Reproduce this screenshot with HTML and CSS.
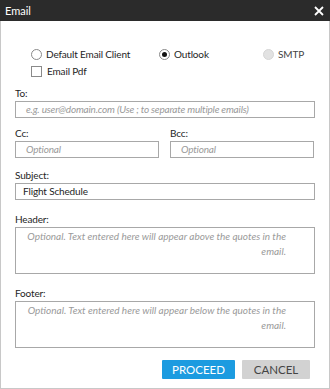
FILE: index.html
```html
<!DOCTYPE html>
<html lang="en">
<head>
    <meta charset="UTF-8">
    <title>Email</title>
    <link rel="stylesheet" href="styles.css">
</head>
<body>
    <div class="window">
        <div class="title-bar">
            <span class="title">Email</span>
            <svg class="close" width="10" height="10" viewBox="0 0 10 10">
                <path d="M1 1 L9 9 M9 1 L1 9" stroke="#fff" stroke-width="1.8" fill="none"/>
            </svg>
        </div>
        <div class="content">
            <div class="options">
                <div class="radio-row">
                    <label class="opt opt-default"><span class="radio"></span>Default Email Client</label>
                    <label class="opt opt-outlook"><span class="radio checked"></span>Outlook</label>
                    <label class="opt disabled"><span class="radio"></span>SMTP</label>
                </div>
                <label class="opt check-row"><span class="checkbox"></span>Email Pdf</label>
            </div>

            <div class="field field-to">
                <label>To:</label>
                <div class="input placeholder">e.g. user@domain.com (Use ; to separate multiple emails)</div>
            </div>

            <div class="field-pair">
                <div class="field">
                    <label>Cc:</label>
                    <div class="input placeholder">Optional</div>
                </div>
                <div class="field">
                    <label>Bcc:</label>
                    <div class="input placeholder">Optional</div>
                </div>
            </div>

            <div class="field field-subject">
                <label>Subject:</label>
                <div class="input">Flight Schedule</div>
            </div>

            <div class="field field-header">
                <label>Header:</label>
                <div class="textarea placeholder">Optional. Text entered here will appear above the quotes in the email.</div>
            </div>

            <div class="field field-footer">
                <label>Footer:</label>
                <div class="textarea placeholder">Optional. Text entered here will appear below the quotes in the email.</div>
            </div>

            <div class="buttons">
                <button class="btn proceed">PROCEED</button>
                <button class="btn cancel">CANCEL</button>
            </div>
        </div>
    </div>
</body>
</html>
```

FILE: styles.css
```css
body {
    margin: 0;
    font-family: Lato, "Open Sans", sans-serif;
    font-size: 10px;
    letter-spacing: -0.15px;
    color: #1e1e1e;
}
.window {
    width: 330px;
    height: 389px;
    box-sizing: border-box;
    border: 1px solid #c8c8c8;
    border-top: none;
    background-color: #fff;
}
.title-bar {
    height: 21px;
    margin: 0 -1px;
    background-color: #2b2b2b;
    display: flex;
    align-items: center;
    justify-content: space-between;
    padding: 0 5px;
}
.title {
    color: #fff;
    font-size: 11px;
    letter-spacing: 0;
}
.close {
    margin-right: 1px;
    margin-top: 1px;
}
.content {
    padding: 26px 14px 0 14px;
}
.options {
    padding-left: 16px;
}
.radio-row {
    display: flex;
    height: 14px;
    align-items: center;
}
.opt {
    display: flex;
    align-items: center;
    line-height: 14px;
}
.opt-default {
    width: 128px;
}
.opt-outlook {
    width: 104px;
}
.radio {
    width: 9px;
    height: 9px;
    border: 1px solid #8a8a8a;
    border-radius: 50%;
    margin-right: 4px;
    display: flex;
    align-items: center;
    justify-content: center;
}
.radio.checked::after {
    content: "";
    width: 5px;
    height: 5px;
    border-radius: 50%;
    background-color: #111;
}
.disabled {
    color: #444;
}
.disabled .radio {
    background-color: #e2e2e2;
    border-color: #d6d6d6;
}
.check-row {
    margin-top: 3px;
}
.checkbox {
    width: 9px;
    height: 9px;
    border: 1px solid #8a8a8a;
    margin-right: 5px;
}
.field label {
    display: block;
    line-height: 14px;
    margin-bottom: 1px;
}
.field-to {
    margin-top: 8px;
}
.input {
    height: 17px;
    box-sizing: border-box;
    border: 1px solid #a8a8a8;
    padding: 0 10px;
    line-height: 15px;
    white-space: nowrap;
    overflow: hidden;
}
.placeholder {
    color: #9a9a9a;
    font-style: italic;
    letter-spacing: -0.2px;
}
.field-pair {
    display: flex;
    gap: 11px;
    margin-top: 8px;
}
.field-pair .field {
    width: 144px;
}
.field-subject {
    margin-top: 10px;
}
.field-subject .input {
    padding: 0 7px;
}
.field-header {
    margin-top: 12px;
}
.field-footer {
    margin-top: 12px;
}
.textarea {
    height: 47px;
    box-sizing: border-box;
    border: 1px solid #a8a8a8;
    padding: 1px 28px 0 4px;
    text-align: right;
    line-height: 15px;
    letter-spacing: 0;
}
.buttons {
    display: flex;
    justify-content: flex-end;
    gap: 7px;
    margin-top: 12px;
    padding-right: 5px;
}
.btn {
    height: 19px;
    border: none;
    border-radius: 1px;
    font-family: Lato, "Open Sans", sans-serif;
    font-size: 11.5px;
    padding: 0;
}
.proceed {
    width: 73px;
    background-color: #1c9be0;
    color: #fff;
}
.cancel {
    width: 68px;
    background-color: #d2d2d2;
    color: #444;
}
```
